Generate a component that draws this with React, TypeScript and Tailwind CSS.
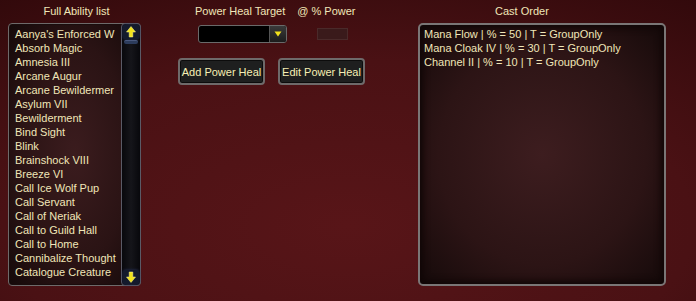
import React from "react";

const abilities = [
  "Aanya's Enforced W",
  "Absorb Magic",
  "Amnesia III",
  "Arcane Augur",
  "Arcane Bewildermer",
  "Asylum VII",
  "Bewilderment",
  "Bind Sight",
  "Blink",
  "Brainshock VIII",
  "Breeze VI",
  "Call Ice Wolf Pup",
  "Call Servant",
  "Call of Neriak",
  "Call to Guild Hall",
  "Call to Home",
  "Cannibalize Thought",
  "Catalogue Creature",
];

const castOrder = [
  "Mana Flow | % = 50 | T = GroupOnly",
  "Mana Cloak IV | % = 30 | T = GroupOnly",
  "Channel II | % = 10 | T = GroupOnly",
];

function Arrow({ down }: { down?: boolean }) {
  return (
    <svg width="10" height="12" viewBox="0 0 10 12" style={{ transform: down ? "rotate(180deg)" : undefined }}>
      <path d="M5 0.5 L9.5 6 L6.8 6 L6.8 11 L3.2 11 L3.2 6 L0.5 6 Z" fill="#f2e21c" stroke="#fff79a" strokeWidth="0.5" />
    </svg>
  );
}

export default function App() {
  return (
    <div className="w-[696px] h-[301px] overflow-hidden flex items-start font-['Liberation_Sans',sans-serif] text-[11px] leading-[14px] text-[#f0e6b8] bg-[radial-gradient(ellipse_90%_100%_at_50%_75%,#581518_0%,#4a1114_55%,#2e080a_100%)]">
      {/* Left column */}
      <div className="ml-[8px] w-[133px] flex flex-col">
        <div className="h-[23px] flex items-center justify-center pl-[4px] pb-[2px]">Full Ability list</div>
        <div className="h-[263px] flex rounded-[4px] border border-[#6e6a6a] shadow-[inset_0_0_0_1px_#1a0c0c] bg-[radial-gradient(ellipse_at_center,#3b1c1e_0%,#2a1314_60%,#140909_100%)]">
          <div className="flex-1 pl-[6px] pt-[3px] overflow-hidden whitespace-nowrap">
            {abilities.map((a) => (
              <div key={a} className="h-[14px]">{a}</div>
            ))}
          </div>
          <div className="w-[20px] -mr-px -my-px flex flex-col items-center rounded-[4px] border border-[#5a5a66] bg-[linear-gradient(to_right,#08080c,#15151a,#08080c)]">
            <div className="w-[16px] h-[14px] mt-[1px] flex items-center justify-center rounded-[3px] bg-[#141a2c] shadow-[0_0_3px_#2a3460]">
              <Arrow />
            </div>
            <div className="w-[14px] h-[4px] mt-[1px] rounded-[2px] bg-[#2c3c5c] border-t border-[#4a5a80]"></div>
            <div className="flex-1"></div>
            <div className="w-[16px] h-[14px] mb-[1px] flex items-center justify-center rounded-[3px] bg-[#141a2c] shadow-[0_0_3px_#2a3460]">
              <Arrow down />
            </div>
          </div>
        </div>
      </div>

      {/* Middle column */}
      <div className="ml-[37px] w-[187px] flex flex-col">
        <div className="h-[23px] flex items-center pb-[2px]">
          <span className="ml-[17px]">Power Heal Target</span>
          <span className="ml-[12px]">@ % Power</span>
        </div>
        <div className="mt-[2px] flex items-center">
          <div className="ml-[20px] w-[89px] h-[18px] flex rounded-[3px] border border-[#6a6a6a] bg-black overflow-hidden">
            <div className="flex-1"></div>
            <div className="w-[17px] flex items-center justify-center bg-[linear-gradient(#3a3a3a,#1c1c1c)] border-l border-[#555]">
              <svg width="8" height="6" viewBox="0 0 8 6">
                <path d="M0.5 0.5 L7.5 0.5 L4 5.5 Z" fill="#f2e21c" />
              </svg>
            </div>
          </div>
          <div className="ml-[30px] w-[31px] h-[12px] border border-[#4a2a2a] bg-[#3a1a1b]"></div>
        </div>
        <div className="mt-[15px] flex gap-[13px]">
          <div className="w-[87px] h-[27px] flex items-center justify-center rounded-[4px] border-2 border-[#6e6a6a] bg-[#1e1f1f] shadow-[inset_0_0_0_1px_#0c0c0c] text-[#f6efb4]">
            Add Power Heal
          </div>
          <div className="w-[87px] h-[27px] flex items-center justify-center rounded-[4px] border-2 border-[#6e6a6a] bg-[#1e1f1f] shadow-[inset_0_0_0_1px_#0c0c0c] text-[#f6efb4]">
            Edit Power Heal
          </div>
        </div>
      </div>

      {/* Right column */}
      <div className="ml-[53px] w-[248px] flex flex-col">
        <div className="h-[23px] flex items-center pl-[77px] pb-[2px]">Cast Order</div>
        <div className="h-[263px] rounded-[5px] border-2 border-[#7a7676] shadow-[inset_0_0_6px_3px_#100606] bg-[radial-gradient(ellipse_at_center,#3d1d1f_0%,#2c1415_60%,#150a0a_100%)] pl-[4px] pt-[2px] whitespace-nowrap">
          {castOrder.map((c) => (
            <div key={c} className="h-[14px]">{c}</div>
          ))}
        </div>
      </div>
    </div>
  );
}
